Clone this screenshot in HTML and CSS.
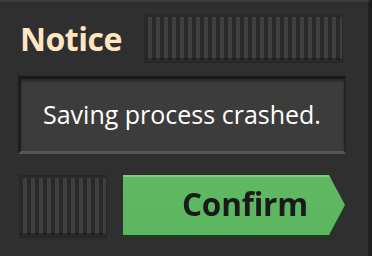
FILE: index.html
```html
<!DOCTYPE html>
<html>
<head>
<meta charset="utf-8">
<link rel="stylesheet" href="styles.css">
</head>
<body>
<div class="frame">
  <div class="header">
    <h1 class="title">Notice</h1>
    <div class="filler filler-top"></div>
  </div>
  <div class="message">Saving process crashed.</div>
  <div class="actions">
    <div class="filler filler-bottom"></div>
    <div class="confirm-wrap">
      <button class="confirm">Confirm</button>
    </div>
  </div>
</div>
</body>
</html>
```
FILE: styles.css
```css
html, body {
  margin: 0;
  padding: 0;
  background: #1e1d1e;
}
.frame {
  width: 370px;
  height: 256px;
  box-sizing: border-box;
  padding: 12px 22px 0 18px;
  background: #302f30;
  border-top: 2px solid #3c3b3c;
  border-right: 2px solid #232223;
  font-family: "Open Sans", "Noto Sans", sans-serif;
}
.header {
  display: flex;
  align-items: center;
  height: 49px;
}
.title {
  margin: 0 0 0 2px;
  font-size: 32px;
  font-weight: 700;
  color: #ffe6c0;
  line-height: 1;
  letter-spacing: -0.5px;
}
.filler {
  box-sizing: border-box;
  border: 1px solid #2a2526;
  background:
    linear-gradient(to bottom, rgba(0,0,0,0) 0, rgba(0,0,0,0) calc(100% - 4px), rgba(0,0,0,0.25) calc(100% - 4px)),
    repeating-linear-gradient(90deg, #2a2929 0 3px, #403f40 3px 7px, #2a2929 7px 8px);
  box-shadow: inset 0 2px 0 #2b2a2a, inset 0 -2px 0 #2a2929;
}
.filler-top {
  flex: 1;
  height: 49px;
  margin: 0 3px 0 22px;
}
.message {
  margin-top: 13px;
  height: 78px;
  box-sizing: border-box;
  display: flex;
  align-items: center;
  padding: 0 0 3px 22px;
  background: #3d3c3d;
  border-top: 3px solid #191819;
  border-left: 3px solid #1e1d1e;
  border-right: 2px solid #262526;
  border-bottom: 3px solid #575656;
  box-shadow: inset 0 2px 3px rgba(0,0,0,0.35);
  color: #ffffff;
  font-size: 25px;
  font-weight: 400;
}
.actions {
  display: flex;
  margin-top: 21px;
  gap: 16px;
  height: 63px;
}
.filler-bottom {
  width: 88px;
  height: 63px;
  margin-left: 1px;
}
.confirm-wrap {
  width: 222px;
  height: 60px;
  filter: drop-shadow(0 3px 0 #1c3d1f);
}
.confirm {
  width: 100%;
  height: 100%;
  border: 0;
  padding: 0 0 2px 59px;
  text-align: left;
  background: linear-gradient(to bottom, #7ccc7d 0, #7ccc7d 2px, #5fb862 2px, #5cb55f 100%);
  clip-path: polygon(0 0, 206px 0, 222px 50%, 206px 100%, 0 100%);
  font-family: "Open Sans", "Noto Sans", sans-serif;
  font-size: 31.5px;
  font-weight: 700;
  color: #1a1a1a;
  letter-spacing: -0.2px;
  line-height: 1;
}
```
